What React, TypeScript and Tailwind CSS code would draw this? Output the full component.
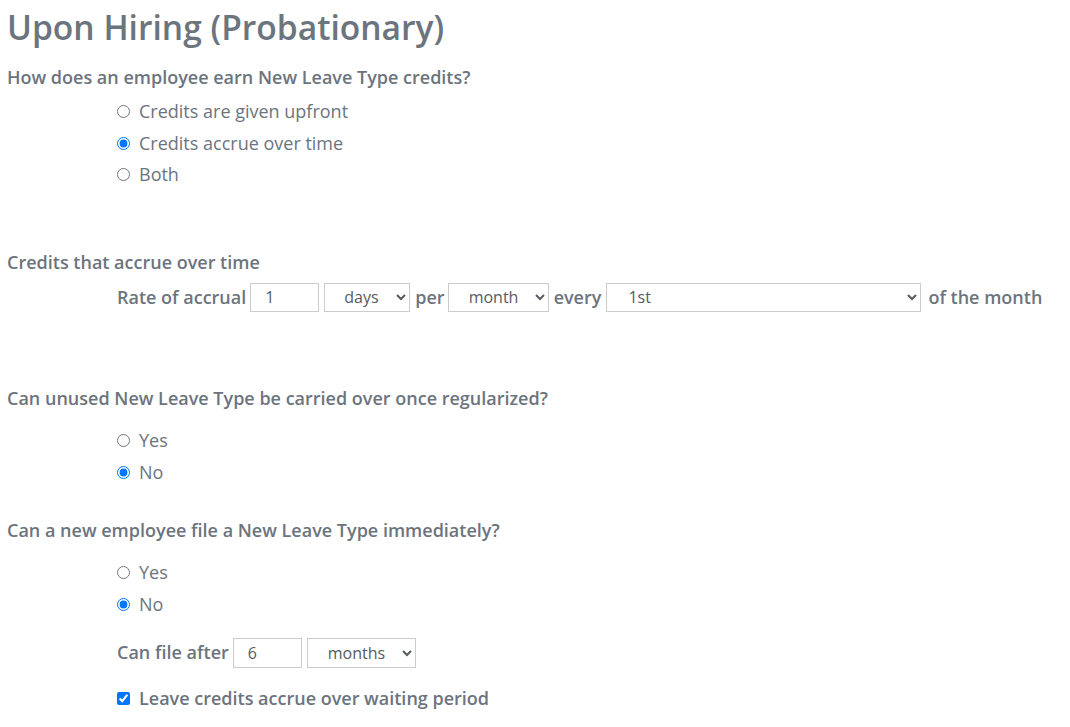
import React from "react";

const font = { fontFamily: '"Open Sans", "Noto Sans", sans-serif' };

function Radio({ label, checked, name }: { label: string; checked?: boolean; name: string }) {
  return (
    <label className="flex h-[31.5px] items-center">
      <input type="radio" name={name} defaultChecked={checked} className="m-0 h-[13px] w-[13px]" />
      <span className="ml-[9px] text-[18px] text-[#6c747e]">{label}</span>
    </label>
  );
}

export default function App() {
  return (
    <div className="min-h-[727px] w-[1070px] bg-white pl-[7px] text-[#6c747e]" style={font}>
      <h1 className="pt-[6px] text-[33.6px] font-semibold leading-[42px] text-[#6c747e]">
        Upon Hiring (Probationary)
      </h1>

      <div className="mt-[17px] text-[18px] font-semibold leading-[24px]">
        How does an employee earn New Leave Type credits?
      </div>
      <div className="ml-[110px] mt-[7px] flex flex-col">
        <Radio name="earn" label="Credits are given upfront" />
        <Radio name="earn" label="Credits accrue over time" checked />
        <Radio name="earn" label="Both" />
      </div>

      <div className="mt-[59px] text-[18px] font-semibold leading-[24px]">Credits that accrue over time</div>
      <div className="ml-[110px] mt-[9px] flex h-[29px] items-center text-[18px] font-semibold">
        <span>Rate of accrual</span>
        <input
          defaultValue="1"
          className="ml-[4px] h-[29px] w-[69px] border border-[#cccccc] pl-[14px] text-[16px] font-normal text-[#555b62] outline-none"
        />
        <select
          defaultValue="days"
          className="ml-[5px] h-[29px] w-[86px] border border-[#cccccc] pl-[15px] text-[16px] font-normal text-[#555b62]"
        >
          <option value="days">days</option>
          <option value="hours">hours</option>
        </select>
        <span className="ml-[5px]">per</span>
        <select
          defaultValue="month"
          className="ml-[3px] h-[29px] w-[101px] border border-[#cccccc] pl-[16px] text-[16px] font-normal text-[#555b62]"
        >
          <option value="month">month</option>
          <option value="year">year</option>
        </select>
        <span className="ml-[5px]">every</span>
        <select
          defaultValue="1st"
          className="ml-[5px] h-[29px] w-[315px] border border-[#cccccc] pl-[17px] text-[16px] font-normal text-[#555b62]"
        >
          <option value="1st">1st</option>
          <option value="15th">15th</option>
        </select>
        <span className="ml-[7px]">of the month</span>
      </div>

      <div className="mt-[74px] text-[18px] font-semibold leading-[24px]">
        Can unused New Leave Type be carried over once regularized?
      </div>
      <div className="ml-[110px] mt-[15.5px] flex flex-col">
        <Radio name="carry" label="Yes" />
        <Radio name="carry" label="No" checked />
      </div>

      <div className="mt-[29.5px] text-[18px] font-semibold leading-[24px]">
        Can a new employee file a New Leave Type immediately?
      </div>
      <div className="ml-[110px] mt-[15.5px] flex flex-col">
        <Radio name="imm" label="Yes" />
        <Radio name="imm" label="No" checked />
      </div>

      <div className="ml-[110px] mt-[17.5px] flex h-[30px] items-center text-[18px] font-semibold">
        <span>Can file after</span>
        <input
          defaultValue="6"
          className="ml-[4px] h-[30px] w-[69px] border border-[#cccccc] pl-[14px] text-[16px] font-normal text-[#555b62] outline-none"
        />
        <select
          defaultValue="months"
          className="ml-[5px] h-[30px] w-[109px] border border-[#cccccc] pl-[16px] text-[16px] font-normal text-[#555b62]"
        >
          <option value="months">months</option>
          <option value="days">days</option>
        </select>
      </div>

      <label className="ml-[110px] mt-[19px] flex h-[24px] items-center text-[18px] font-semibold">
        <input type="checkbox" defaultChecked className="m-0 h-[13px] w-[13px]" />
        <span className="ml-[9px]">Leave credits accrue over waiting period</span>
      </label>
    </div>
  );
}
